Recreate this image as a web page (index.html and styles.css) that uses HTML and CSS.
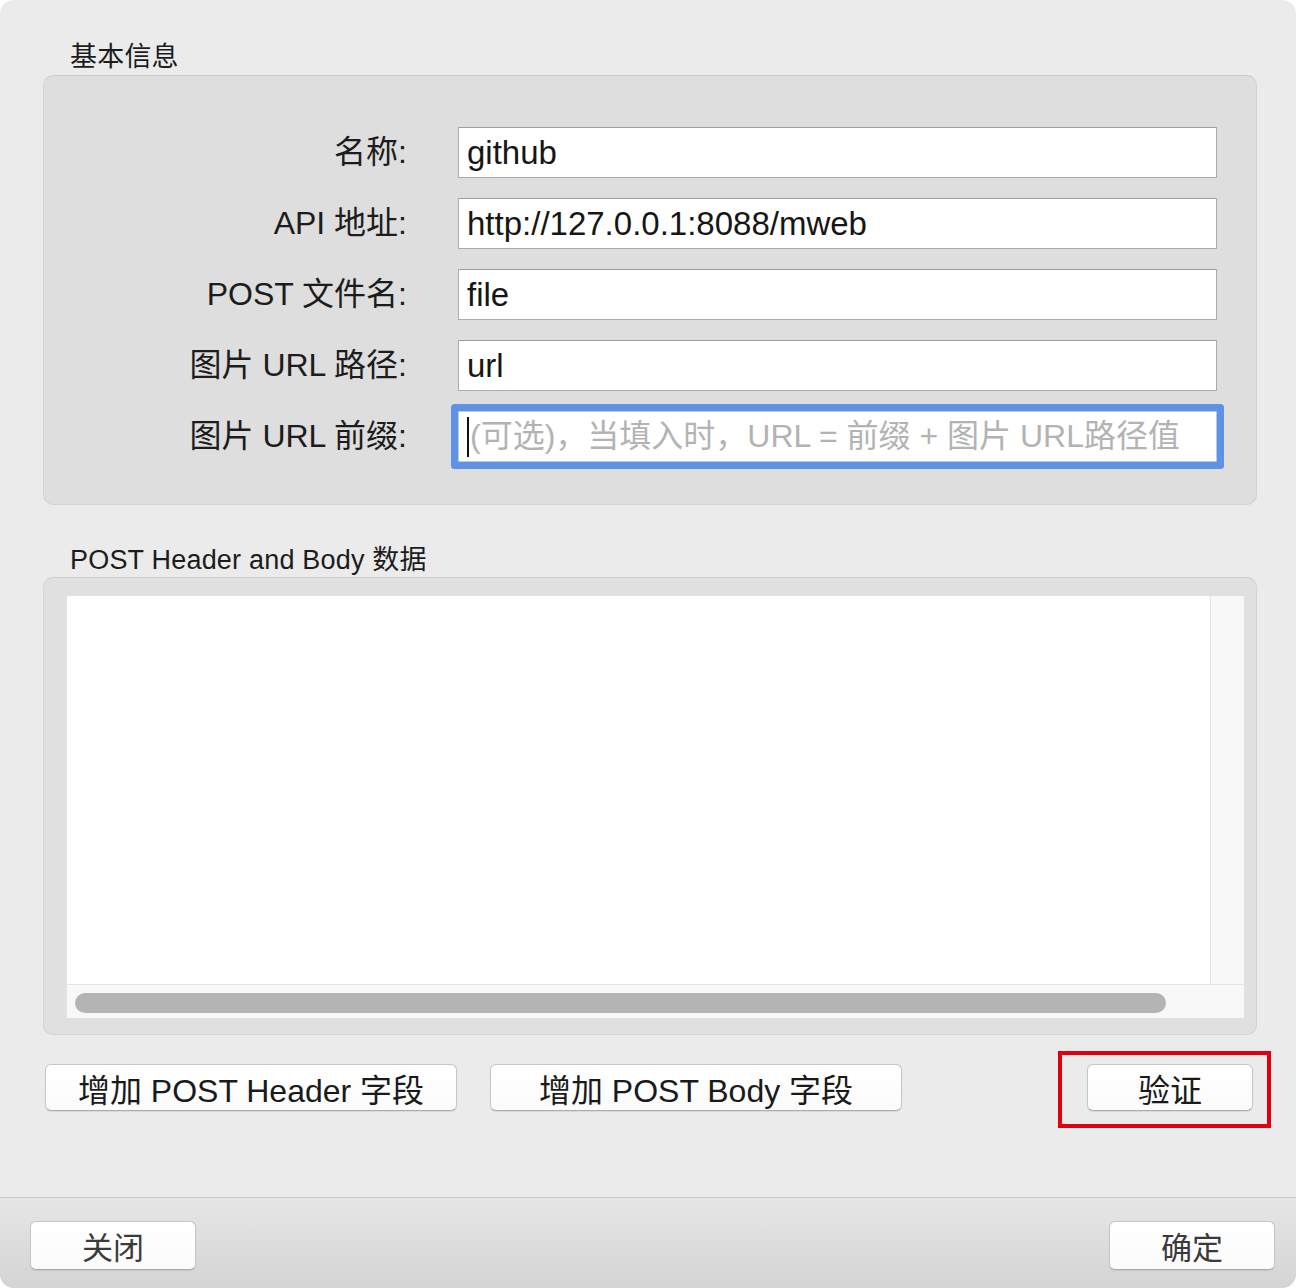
FILE: index.html
```html
<!DOCTYPE html>
<html lang="zh-CN">
<head>
    <meta charset="UTF-8">
    <meta name="viewport" content="width=device-width, initial-scale=1.0">
    <title>图床设置</title>
    <link rel="stylesheet" href="styles.css">
</head>
<body>
    <div class="window">
        <div class="content">
            <div class="group-title">基本信息</div>
            <div class="group-box form">
                <div class="label">名称:</div>
                <div class="field">github</div>
                <div class="label">API 地址:</div>
                <div class="field">http://127.0.0.1:8088/mweb</div>
                <div class="label">POST 文件名:</div>
                <div class="field">file</div>
                <div class="label">图片 URL 路径:</div>
                <div class="field">url</div>
                <div class="label">图片 URL 前缀:</div>
                <div class="field focused"><span class="caret"></span><span class="placeholder">(可选)，当填入时，URL = 前缀 + 图片 URL路径值</span></div>
            </div>

            <div class="group-title second">POST Header and Body 数据</div>
            <div class="group-box editor">
                <div class="scroll-view">
                    <div class="scroll-main">
                        <div class="table-area"></div>
                        <div class="v-track"></div>
                    </div>
                    <div class="h-track">
                        <div class="h-thumb"></div>
                    </div>
                </div>
            </div>

            <div class="actions">
                <button class="button wide">增加 POST Header 字段</button>
                <button class="button wide">增加 POST Body 字段</button>
                <div class="verify-wrap">
                    <button class="button small">验证</button>
                    <div class="highlight"></div>
                </div>
            </div>
        </div>

        <div class="footer">
            <button class="button small muted">关闭</button>
            <button class="button small muted">确定</button>
        </div>
    </div>
</body>
</html>
```

FILE: styles.css
```css
body {
    margin: 0;
    background-color: #fff;
    font-family: "Liberation Sans", "Noto Sans CJK SC", sans-serif;
    color: #1c1c1c;
}
.window {
    width: 1296px;
    height: 1288px;
    background-color: #ebebeb;
    border-radius: 14px;
    overflow: hidden;
    display: flex;
    flex-direction: column;
}
.content {
    flex: 1;
    padding: 40px 39px 0 43px;
}
.group-title {
    font-size: 27px;
    line-height: 34px;
    padding-left: 27px;
    color: #1c1c1c;
    letter-spacing: 0.2px;
}
.group-title.second {
    margin-top: 38px;
}
.group-box {
    background-color: #dedede;
    border: 1px solid #d3d3d3;
    border-top-color: #cdcdcd;
    border-radius: 10px;
}
.form {
    margin-top: 1px;
    display: grid;
    grid-template-columns: 363px 1fr;
    column-gap: 51px;
    row-gap: 20px;
    padding: 51px 39px 42px 0;
}
.label {
    text-align: right;
    font-size: 32px;
    line-height: 51px;
    color: #1c1c1c;
}
.field {
    height: 49px;
    background-color: #fff;
    border: 1px solid #ababab;
    border-top-color: #9d9d9d;
    border-radius: 1px;
    font-size: 33px;
    line-height: 51px;
    padding-left: 8px;
    color: #161616;
    display: flex;
    align-items: center;
    white-space: nowrap;
    overflow: hidden;
}
.field.focused {
    border-color: #b9c9e6;
    box-shadow: 0 0 0 7px #5e92e4;
}
.caret {
    width: 2px;
    height: 40px;
    background-color: #111;
    margin-right: 1px;
}
.placeholder {
    color: #b3b3b3;
    font-size: 32px;
}
.editor {
    padding: 18px 12px 16px 23px;
    background-color: #e0e0e0;
}
.scroll-view {
    height: 422px;
    display: flex;
    flex-direction: column;
    background-color: #f8f8f8;
}
.scroll-main {
    flex: 1;
    display: flex;
}
.table-area {
    flex: 1;
    background-color: #fff;
}
.v-track {
    width: 33px;
    border-left: 1px solid #e4e4e4;
    background-color: #f8f8f8;
}
.h-track {
    height: 34px;
    border-top: 1px solid #e4e4e4;
    padding: 8px 0 0 8px;
    box-sizing: border-box;
    background-color: #f8f8f8;
}
.h-thumb {
    width: 1091px;
    height: 20px;
    border-radius: 10px;
    background-color: #b4b4b4;
}
.actions {
    display: flex;
    align-items: center;
    margin-top: 29px;
    padding: 0 4px 0 2px;
    gap: 33px;
}
.button {
    height: 47px;
    background: linear-gradient(#ffffff, #fbfbfb);
    border: 1px solid #c6c6c6;
    border-bottom-color: #acacac;
    border-radius: 6px;
    box-shadow: 0 1px 1px rgba(0, 0, 0, 0.08);
    font-family: "Liberation Sans", "Noto Sans CJK SC", sans-serif;
    font-size: 32px;
    color: #1a1a1a;
    padding: 0;
    cursor: pointer;
}
.button.wide {
    width: 412px;
}
.button.small {
    width: 166px;
}
.button.muted {
    height: 49px;
    color: #3a3a3a;
    font-size: 31px;
}
.verify-wrap {
    margin-left: auto;
    position: relative;
    display: flex;
}
.highlight {
    position: absolute;
    top: -13px;
    left: -29px;
    right: -18px;
    bottom: -17px;
    border: 4px solid #e0000f;
}
.footer {
    box-sizing: border-box;
    height: 91px;
    border-top: 1px solid #c9c9c9;
    background: linear-gradient(#e6e6e6, #d4d4d4);
    display: flex;
    justify-content: space-between;
    align-items: flex-start;
    padding: 23px 21px 0 30px;
}
```
